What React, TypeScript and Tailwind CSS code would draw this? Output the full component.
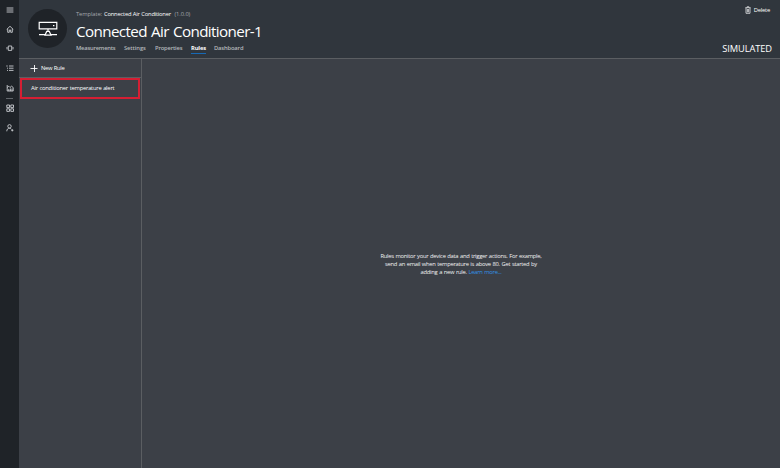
import type { ReactNode } from 'react';

function Icon({ children }: { children: ReactNode }) {
  return (
    <svg viewBox="0 0 8 8" className="size-2 shrink-0" fill="none" stroke="#c9ccd0" strokeWidth="0.9">
      {children}
    </svg>
  );
}

function Sidebar() {
  return (
    <nav className="flex w-[19px] shrink-0 flex-col items-center bg-[#1f2328] pt-[6px]">
      <Icon><path d="M.6 2h6.8M.6 4h6.8M.6 6h6.8" /></Icon>
      <div className="mt-[11px]"><Icon><path d="M.7 4.5 4 1.3l3.3 3.2M1.7 3.8V7.3h1.6V5h1.4v2.3h1.6V3.8" /></Icon></div>
      <div className="mt-[11px]"><Icon><path d="M2.3 2h3.4v4.4H2.3zM1 3v2.4M7 3v2.4" /></Icon></div>
      <div className="mt-[12px]"><Icon><path d="M3 2h4.5M3 4.2h4.5M3 6.4h4.5M.3 2h1.4M1 4.2h1M1 6.4h1" /></Icon></div>
      <div className="mt-[12px]"><Icon><path d="M1.2 1v6h6V3.5L5.5 2.2 4 3.5 2.8 2.2 1.2 3.5M2.8 7V5M4.4 7V4.5M6 7V4.5" /></Icon></div>
      <div className="mt-[6px] h-px w-[7px] bg-[#62666b]" />
      <div className="mt-[5px]"><Icon><path d="M.8 1h2.7v2.6H.8zM4.8 1h2.7v2.6H4.8zM.8 4.8h2.7v2.6H.8zM4.8 4.8h2.7v2.6H4.8z" /></Icon></div>
      <div className="mt-[12px]"><Icon><circle cx="3.5" cy="2.3" r="1.7" /><path d="M.8 7.3c0-2 1-3 2.7-3 1 0 1.5.4 1.9.9M5.2 6.3h2.2M6.3 5.2v2.2" /></Icon></div>
    </nav>
  );
}

function Header() {
  return (
    <header className="flex h-[59px] shrink-0 border-b border-[#5b5e62] bg-[#30363d] pl-[9px] pr-[8px]">
      <div className="mt-[9px] flex size-[39px] shrink-0 items-center justify-center rounded-full bg-[#1f2328]">
        <svg viewBox="0 0 20 16" className="h-4 w-5" fill="none" stroke="#fff" strokeWidth="1.2">
          <path d="M1.2 1.3h17.6v6.5H1.2zM10 8v2.3M8.7 10.4h2.6l1.7 3.7H7zM1 13.6h6.2M12.8 13.6H19M15 4.6h1.4" />
        </svg>
      </div>
      <div className="ml-[9px] whitespace-nowrap">
        <div className="mt-[10px] flex h-2 items-center text-[5.8px] leading-[8px] text-[#a5a8ac]">
          <span className="w-[28px] tracking-[-0.1px]">Template:</span>
          <span className="w-[70.5px] tracking-[-0.21px] text-white [word-spacing:0.3px]">Connected Air Conditioner</span>
          <span className="tracking-[-0.1px]">(1.0.0)</span>
        </div>
        <h1 className="mt-[3px] h-[20px] text-[15.2px] leading-[20px] tracking-[-0.61px] text-white [word-spacing:0.8px]">Connected Air Conditioner-1</h1>
        <div className="mt-[3px] flex h-[10px] text-[5.8px] font-semibold leading-[8px] text-[#b5b8bb]">
          <span className="w-[48px] tracking-[-0.22px]">Measurements</span>
          <span className="w-[31px] tracking-[-0.08px]">Settings</span>
          <span className="w-[36px] tracking-[-0.18px]">Properties</span>
          <span className="mr-[8px] h-[10px] w-[15px] border-b border-[#1769b5] font-bold tracking-[-0.15px] text-white">Rules</span>
          <span className="tracking-[-0.15px]">Dashboard</span>
        </div>
      </div>
      <div className="ml-auto flex flex-col items-end text-white">
        <div className="mr-[2px] mt-[6px] flex h-2 items-center text-[5.8px] leading-[8px]">
          <svg viewBox="0 0 6 8" className="mr-[3px] h-2 w-1.5" fill="none" stroke="#e5e6e8" strokeWidth=".8">
            <path d="M.3 1.7h5.4M2 1.5V.8h2v.7M1 2v5.3h4V2M2.4 3v3.3M3.6 3v3.3" />
          </svg>
          <span className="tracking-[-0.2px]">Delete</span>
        </div>
        <span className="mt-[29px] text-[9.3px] leading-[12px] tracking-[-0.1px]">SIMULATED</span>
      </div>
    </header>
  );
}

export default function App() {
  return (
    <div className="flex h-[468px] w-[780px] overflow-hidden bg-[#3c4047] font-['Open_Sans','Noto_Sans',sans-serif]">
      <Sidebar />
      <div className="flex min-w-0 flex-1 flex-col">
        <Header />
        <main className="flex min-h-0 flex-1">
          <aside className="w-[123px] shrink-0 border-r border-[#5b5e62] text-[5.8px] leading-[8px] text-white">
            <button className="flex h-[19px] w-full items-center border-b border-[#5b5e62] pl-[11px]">
              <svg viewBox="0 0 8 8" className="mr-[3px] size-2" stroke="#fff" strokeWidth=".9"><path d="M.5 4.5h7M4.5 1v7" /></svg>
              <span className="tracking-[-0.28px] [word-spacing:0.3px]">New Rule</span>
            </button>
            <div className="ml-px flex h-[21px] w-[120px] items-center whitespace-nowrap border-2 border-[#d51e33] pb-px pl-[9px]">
              <span className="tracking-[-0.23px] [word-spacing:0.4px]">Air conditioner temperature alert</span>
            </div>
          </aside>
          <section className="flex flex-1 items-center justify-center pt-px">
            <p className="whitespace-nowrap text-center text-[5.8px] leading-[8.2px] tracking-[-0.26px] text-[#f0f1f2] [word-spacing:0.4px]">
              Rules monitor your device data and trigger actions. For example,<br />
              send an email when temperature is above 80. Get started by<br />
              adding a new rule. <a className="text-[#3193e8]">Learn more...</a>
            </p>
          </section>
        </main>
      </div>
    </div>
  );
}
